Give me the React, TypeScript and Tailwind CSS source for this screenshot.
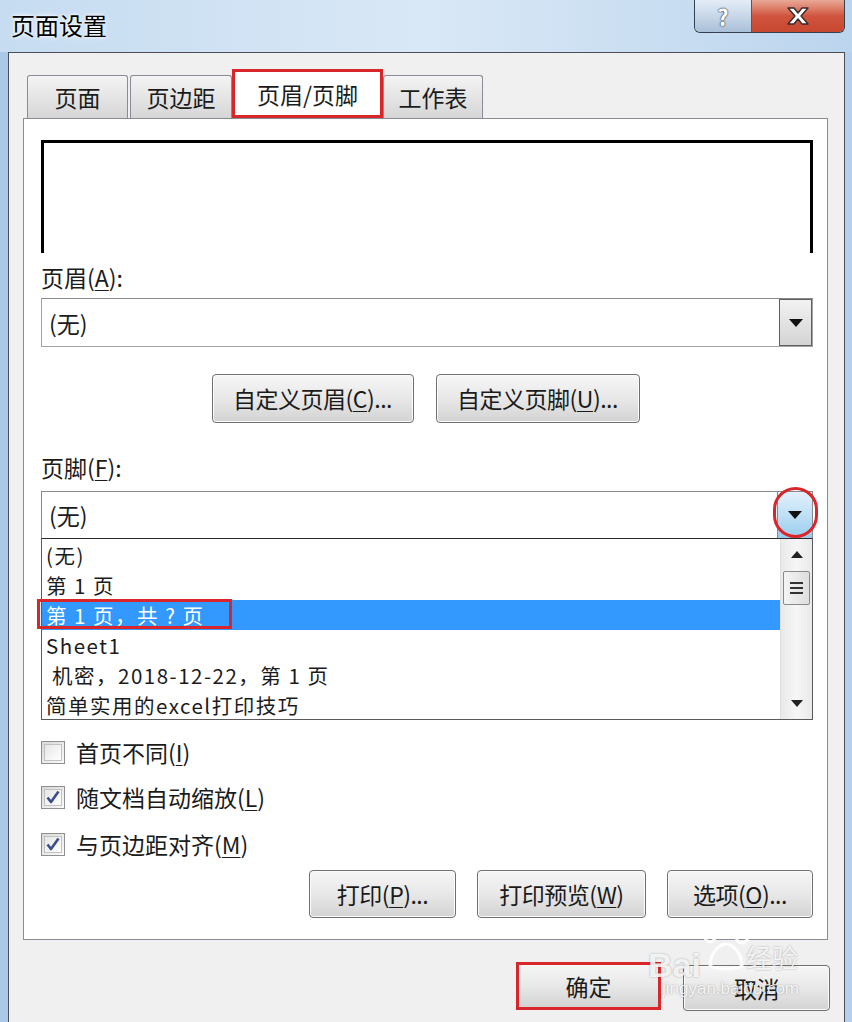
import React from 'react';

const font = "font-['Microsoft_YaHei','Noto_Sans_CJK_SC',sans-serif]";

const U: React.FC<{ children: React.ReactNode }> = ({ children }) => (
    <span className="underline underline-offset-[3px] decoration-1">{children}</span>
);

const Btn: React.FC<{ children: React.ReactNode; className?: string }> = ({ children, className = '' }) => (
    <button
        type="button"
        className={`flex items-center justify-center rounded-[4px] border border-[#707070] bg-gradient-to-b from-[#f6f6f6] via-[#e8e8e8] to-[#d3d3d3] shadow-[inset_0_0_0_1px_#fbfbfb] text-[23px] leading-none tracking-[-0.5px] text-[#1b1b1b] ${className}`}
    >
        {children}
    </button>
);

const Tab: React.FC<{ children: React.ReactNode; w: string; active?: boolean }> = ({ children, w, active }) =>
    active ? (
        <div className={`${w} h-[49px] flex items-center justify-center bg-white border-[3px] border-[#d9262a] text-[23px] leading-[28px] text-[#1b1b1b]`}>
            {children}
        </div>
    ) : (
        <div className={`${w} h-[43px] flex items-center justify-center rounded-t-[3px] border border-b-0 border-[#898c95] bg-gradient-to-b from-[#f4f4f4] to-[#d6d6d6] text-[23px] leading-[28px] text-[#1b1b1b]`}>
            {children}
        </div>
    );

const Check: React.FC<{ checked?: boolean }> = ({ checked }) => (
    <div className="w-[24px] h-[23px] border border-[#8e8f8f] bg-gradient-to-br from-[#d8d8d8] to-[#fbfbfb] p-[2px]">
        <div className="w-full h-full border border-[#c2c2c2] bg-gradient-to-br from-[#e6e6e6] to-[#ffffff] flex items-center justify-center">
            {checked && (
                <svg width="16" height="16" viewBox="0 0 16 16">
                    <path d="M2.5 8.5 L6 13 L13.5 2.5" fill="none" stroke="#3b4f8c" strokeWidth="2.6" strokeLinejoin="round" />
                </svg>
            )}
        </div>
    </div>
);

const Arrow: React.FC = () => (
    <svg width="14" height="8" viewBox="0 0 14 8">
        <path d="M0 0 H14 L7 8 Z" fill="#111" />
    </svg>
);

const items = ['(无)', '第 1 页', '第 1 页，共 ? 页', 'Sheet1', ' 机密，2018-12-22，第 1 页', '简单实用的excel打印技巧'];

const App: React.FC = () => {
    return (
        <div className={`${font} relative w-[852px] h-[1022px] overflow-hidden flex flex-col bg-gradient-to-r from-[#aac9e8] via-[#cfe2f4] to-[#b5d0ec]`}>
            {/* title bar */}
            <div className="h-[52px] flex items-start justify-between bg-gradient-to-r from-[#c6dcf1] via-[#d9e8f6] to-[#bcd5ee]">
                <div className="pl-[11px] pt-[9px] text-[24px] leading-[32px] text-black [text-shadow:0_0_6px_#ffffff,0_0_3px_#ffffff]">页面设置</div>
                <div className="flex mr-[7px] h-[33px] border border-t-0 border-[#33404f] rounded-b-[6px] overflow-hidden">
                    <div className="w-[57px] flex items-center justify-center border-r border-[#4b5b70] bg-gradient-to-b from-[#e4edf7] via-[#c8d7e8] to-[#aac0d8] text-[22px] leading-none font-bold text-white [text-shadow:0_0_2px_#1f2d40,0_0_1px_#1f2d40]">
                        ?
                    </div>
                    <div className="w-[92px] flex items-center justify-center bg-gradient-to-b from-[#e8a896] via-[#d0543e] to-[#c8472f]">
                        <svg width="26" height="20" viewBox="0 0 26 20">
                            <path d="M3 2 H9 L13 7 L17 2 H23 L16 10 L23 18 H17 L13 13 L9 18 H3 L10 10 Z" fill="#ffffff" stroke="#3a2a2a" strokeWidth="1.4" strokeLinejoin="round" />
                        </svg>
                    </div>
                </div>
            </div>

            {/* body */}
            <div className="flex-1 ml-[8px] mr-[7px] border-l border-t border-r border-[#4a4f57] bg-[#f0f0f0] pl-[14px] pr-[16px] pt-[16px]">
                <div className="flex items-end h-[49px] pl-[4px] gap-[2px]">
                    <Tab w="w-[101px]">页面</Tab>
                    <div className="flex items-end">
                        <Tab w="w-[102px]">页边距</Tab>
                        <Tab w="w-[151px]" active>页眉/页脚</Tab>
                        <Tab w="w-[100px]">工作表</Tab>
                    </div>
                </div>

                <div className="bg-white border border-[#898c95] pl-[17px] pr-[14px] pt-[21px] pb-[21px] text-[23px] leading-[28px] text-[#1b1b1b]">
                    {/* preview */}
                    <div className="h-[113px] border-t-[3px] border-l-[3px] border-r-[3px] border-black" />

                    <div className="mt-[12px] h-[24px] leading-[24px]">页眉(<U>A</U>):</div>

                    <div className="mt-[9px] h-[49px] flex border border-[#a3a3a3] border-t-[#8a8a8a]">
                        <div className="flex-1 flex items-center pl-[7px]">(无)</div>
                        <div className="w-[33px] flex items-center justify-center border border-[#5f5f5f] bg-gradient-to-b from-[#f2f2f2] to-[#d4d4d4]">
                            <Arrow />
                        </div>
                    </div>

                    <div className="mt-[27px] flex justify-center gap-[22px] pr-[3px]">
                        <Btn className="w-[202px] h-[49px]">
                            自定义页眉(<U>C</U>)...
                        </Btn>
                        <Btn className="w-[204px] h-[49px]">
                            自定义页脚(<U>U</U>)...
                        </Btn>
                    </div>

                    <div className="mt-[32px] h-[24px] leading-[24px]">页脚(<U>F</U>):</div>

                    <div className="mt-[12px] h-[48px] flex border border-[#8a8a8a] border-b-[#2a2a2a]">
                        <div className="flex-1 flex items-center pl-[7px]">(无)</div>
                        <div className="w-[35px] flex items-center justify-center border-l border-[#6c8fb0] bg-gradient-to-b from-[#e2f1fb] via-[#bfe0f6] to-[#98cbee]">
                            <Arrow />
                        </div>
                    </div>

                    <div className="h-[181px] flex border border-t-0 border-[#5a5a5a]">
                        <div className="flex-1 pt-[1px]">
                            {items.map((t, i) => (
                                <div
                                    key={i}
                                    className={`h-[30px] flex items-center pl-[4px] text-[20.5px] leading-[26px] tracking-[1.5px] whitespace-pre ${i === 2 ? 'bg-[#3399ff] text-white' : ''}`}
                                >
                                    {t}
                                </div>
                            ))}
                        </div>
                        <div className="w-[32px] flex flex-col items-center bg-gradient-to-r from-[#e9e9e9] via-[#f6f6f6] to-[#e9e9e9] border-l border-[#e0e0e0]">
                            <svg className="mt-[12px]" width="12" height="7" viewBox="0 0 12 7">
                                <path d="M0 7 L6 0 L12 7 Z" fill="#222" />
                            </svg>
                            <div className="mt-[13px] w-[27px] h-[34px] rounded-[2px] border border-[#8a8a8a] bg-gradient-to-r from-[#f4f4f4] to-[#dedede] flex flex-col items-center justify-center gap-[3px]">
                                <div className="w-[13px] h-[2px] bg-[#333]" />
                                <div className="w-[13px] h-[2px] bg-[#333]" />
                                <div className="w-[13px] h-[2px] bg-[#333]" />
                            </div>
                            <svg className="mt-auto mb-[12px]" width="12" height="7" viewBox="0 0 12 7">
                                <path d="M0 0 H12 L6 7 Z" fill="#222" />
                            </svg>
                        </div>
                    </div>

                    <div className="mt-[17px] flex flex-col gap-[16px]">
                        <label className="h-[30px] flex items-center gap-[11px]">
                            <Check />
                            <span>首页不同(<U>I</U>)</span>
                        </label>
                        <label className="h-[30px] flex items-center gap-[11px] -mt-px">
                            <Check checked />
                            <span>随文档自动缩放(<U>L</U>)</span>
                        </label>
                        <label className="h-[30px] flex items-center gap-[11px] mt-px">
                            <Check checked />
                            <span>与页边距对齐(<U>M</U>)</span>
                        </label>
                    </div>

                    <div className="mt-[11px] flex justify-end gap-[21px]">
                        <Btn className="w-[147px] h-[48px]">
                            打印(<U>P</U>)...
                        </Btn>
                        <Btn className="w-[169px] h-[48px]">
                            打印预览(<U>W</U>)
                        </Btn>
                        <Btn className="w-[146px] h-[48px]">
                            选项(<U>O</U>)...
                        </Btn>
                    </div>
                </div>

                <div className="mt-[22px] flex justify-end items-start gap-[22px] -mr-[2px]">
                    <button
                        type="button"
                        className="w-[145px] h-[48px] flex items-center justify-center border-[3px] border-[#d9262a] bg-gradient-to-b from-[#f6f6f6] via-[#e8e8e8] to-[#d3d3d3] text-[23px] leading-none text-[#1b1b1b]"
                    >
                        确定
                    </button>
                    <Btn className="w-[147px] h-[46px] mt-[3px]">取消</Btn>
                </div>
            </div>

            {/* red annotation marks */}
            <div className="absolute left-[773px] top-[487px] w-[45px] h-[51px] rounded-full border-[3px] border-[#d9262a]" />
            <div className="absolute left-[37px] top-[599px] w-[195px] h-[30px] border-[3px] border-[#d9262a]" />

            {/* watermark */}
            <div className="absolute left-[648px] top-[920px] w-[170px] h-[80px] pointer-events-none text-white/85 [text-shadow:0_0_2px_rgba(0,0,0,0.35)] font-['Liberation_Sans','Noto_Sans_CJK_SC',sans-serif]">
                <svg className="absolute left-[48px] top-[0px]" width="56" height="52" viewBox="0 0 56 52">
                    <g fill="none" stroke="#ffffff" strokeOpacity="0.9" strokeWidth="3">
                        <ellipse cx="14" cy="14" rx="6" ry="8" />
                        <ellipse cx="30" cy="8" rx="6" ry="7" />
                        <ellipse cx="46" cy="16" rx="6" ry="7" />
                        <path d="M14 46 C14 30 26 24 30 24 C36 24 46 32 46 46 C38 50 22 50 14 46 Z" />
                    </g>
                </svg>
                <div className="absolute left-[0px] top-[28px] text-[34px] leading-none font-bold">Bai</div>
                <div className="absolute left-[98px] top-[26px] text-[26px] leading-none">经验</div>
                <div className="absolute left-[14px] top-[60px] text-[17px] leading-none">jingyan.baidu.com</div>
            </div>
        </div>
    );
};

export default App;
